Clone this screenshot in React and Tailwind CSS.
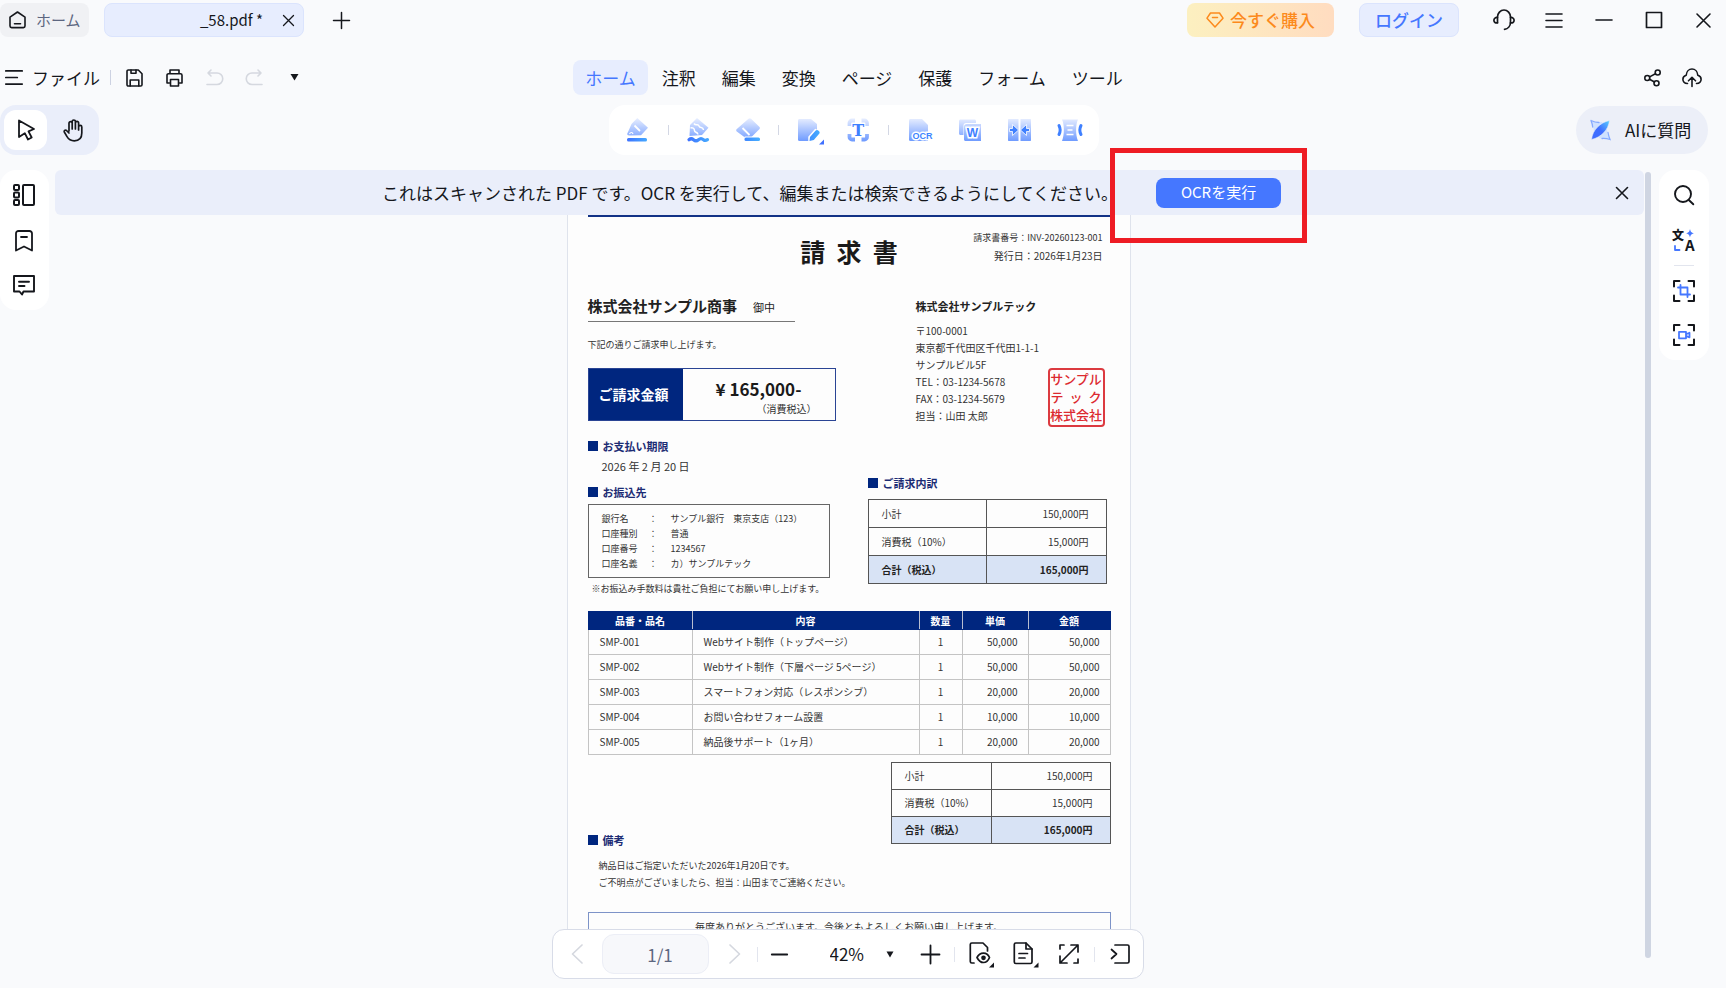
import React, { useState } from 'react';

const MENU_TABS = ['ホーム', '注釈', '編集', '変換', 'ページ', '保護', 'フォーム', 'ツール'];

const ITEMS = [
  { code: 'SMP-001', name: 'Webサイト制作（トップページ）', qty: '1', price: '50,000', amount: '50,000' },
  { code: 'SMP-002', name: 'Webサイト制作（下層ページ 5ページ）', qty: '1', price: '50,000', amount: '50,000' },
  { code: 'SMP-003', name: 'スマートフォン対応（レスポンシブ）', qty: '1', price: '20,000', amount: '20,000' },
  { code: 'SMP-004', name: 'お問い合わせフォーム設置', qty: '1', price: '10,000', amount: '10,000' },
  { code: 'SMP-005', name: '納品後サポート（1ヶ月）', qty: '1', price: '20,000', amount: '20,000' },
];

const BANK = [
  ['銀行名', 'サンプル銀行　東京支店（123）'],
  ['口座種別', '普通'],
  ['口座番号', '1234567'],
  ['口座名義', 'カ）サンプルテック'],
];

// Line icon helper, drawn at its natural size
function Icon({ w, h, sw = 1.6, className = '', children }) {
  return (
    <svg
      width={w}
      height={h}
      viewBox={`0 0 ${w} ${h}`}
      fill="none"
      stroke="currentColor"
      strokeWidth={sw}
      strokeLinecap="round"
      strokeLinejoin="round"
      className={`block shrink-0 overflow-visible ${className}`}
      aria-hidden="true"
    >
      {children}
    </svg>
  );
}

// Filled gradient icon for the tool strip
function ToolIcon({ w = 24, children }) {
  return (
    <svg width={w} height={26} viewBox={`0 0 ${w} 26`} fill="url(#soft)" className="block overflow-visible" aria-hidden="true">
      {children}
    </svg>
  );
}

function Gradients() {
  return (
    <svg width="0" height="0" className="absolute" aria-hidden="true">
      <defs>
        <linearGradient id="soft" gradientUnits="userSpaceOnUse" x1="0" y1="1" x2="0" y2="24">
          <stop offset="0" stopColor="#e9efff" />
          <stop offset="1" stopColor="#6f9bff" />
        </linearGradient>
        <linearGradient id="strong" gradientUnits="userSpaceOnUse" x1="0" y1="0" x2="24" y2="0">
          <stop offset="0" stopColor="#3f70ff" />
          <stop offset="1" stopColor="#45b0ff" />
        </linearGradient>
        <linearGradient id="leaf" x1="0" y1="1" x2="1" y2="0">
          <stop offset="0.5" stopColor="#3f6dff" />
          <stop offset="1" stopColor="#57d0ff" />
        </linearGradient>
      </defs>
    </svg>
  );
}

function TitleBar() {
  return (
    <header className="flex items-center justify-between pt-[3px] pr-[15px]">
      <div className="flex items-center">
        <button className="flex h-[34px] w-[89px] items-center gap-[10px] rounded-lg bg-[#f0f1f4] pl-[9px] text-[15px] text-[#5c6680]">
          <Icon w={17} h={18} className="text-[#15171c]">
            <path d="M1 6.2 8.5 1 16 6.2V15a1.6 1.6 0 0 1-1.6 1.6H2.600A1.600 1.600 0 0 1 1 15z" />
            <path d="M5.500 12.700h6" />
          </Icon>
          ホーム
        </button>
        <div className="ml-[15px] flex h-[34px] w-[200px] items-center justify-end gap-5 rounded-lg border border-[#dbe4fd] bg-[#e7edfe] pr-[9px]">
          <span className="text-[15px]">_58.pdf *</span>
          <button aria-label="タブを閉じる">
            <Icon w={11} h={11} sw={1.3}><path d="M.5.5l10 10M10.500.5l-10 10" /></Icon>
          </button>
        </div>
        <button className="ml-[29px]" aria-label="新しいタブ">
          <Icon w={17} h={17} sw={1.5}><path d="M8.500.5v16M.5 8.500h16" /></Icon>
        </button>
      </div>

      <div className="flex items-center">
        <button className="flex h-[34px] w-[147px] items-center justify-center gap-[6px] rounded-lg bg-linear-to-r from-[#fcf0c0] to-[#ffdcc0] text-[17px] font-medium text-[#fc8a1c]">
          <Icon w={18} h={16} sw={1.5}>
            <path d="M4.500 1h9L17 6.200 9 15 1 6.200z" />
            <path d="M6.500 5.500h5" />
          </Icon>
          今すぐ購入
        </button>
        <button className="ml-[25px] h-[34px] w-[100px] rounded-lg border border-[#dbe4fd] bg-[#e7edfe] text-[17px] font-medium text-[#4577ff]">
          ログイン
        </button>
        <button className="ml-[34px]" aria-label="サポート">
          <Icon w={22} h={22} sw={1.7}>
            <path d="M4.500 13.500V8a6.500 7 0 0 1 13 0v5c0 4-2.500 7-6 7.300" />
            <path d="M4.500 8.500C2.500 8.300.9 9.300.9 11.300s1.600 2.800 3.600 2.500M17.500 8.500c2-.2 3.600.8 3.600 2.800s-1.600 2.800-3.600 2.500" />
          </Icon>
        </button>
        <button className="ml-[30px]" aria-label="メニュー">
          <Icon w={18} h={15} sw={1.6}><path d="M1 1h16M1 7.500h16M1 14h16" /></Icon>
        </button>
        <button className="ml-[33px]" aria-label="最小化">
          <Icon w={16} h={16} sw={1.6}><path d="M0 8h16" /></Icon>
        </button>
        <button className="ml-[33px]" aria-label="最大化">
          <Icon w={18} h={18} sw={1.7}><rect x="1.500" y="1.500" width="15" height="15" /></Icon>
        </button>
        <button className="ml-[33px]" aria-label="閉じる">
          <Icon w={15} h={15} sw={1.6}><path d="M1 1l13 13M14 1 1 14" /></Icon>
        </button>
      </div>
    </header>
  );
}

function MenuBar() {
  const [active, setActive] = useState('ホーム');

  return (
    <div className="mt-[23px] grid grid-cols-[1fr_auto_1fr] items-center pr-[18px]">
      <div className="flex items-center pl-[5px]">
        <button className="flex items-center gap-[9px] text-[17px]">
          <Icon w={18} h={15} sw={1.700}><path d="M.8.9h16.400M.8 7.500h11.500M.8 14.100h16.400" /></Icon>
          ファイル
        </button>
        <span className="ml-[10px] h-[15px] w-px bg-[#cdd2e2]" />
        <button className="ml-[15px]" aria-label="保存">
          <Icon w={17} h={18}>
            <path d="M1 2.300A1.300 1.300 0 0 1 2.300 1h10L16 4.700v11a1.300 1.300 0 0 1-1.300 1.300H2.300A1.300 1.300 0 0 1 1 15.700z" />
            <path d="M4.200 17v-6h8.600v6M5 1v3.300h5V1" />
          </Icon>
        </button>
        <button className="ml-[23px]" aria-label="印刷">
          <Icon w={17} h={18}>
            <path d="M4 4.500V1h9v3.500M3.500 14H1V6.200A1.500 1.500 0 0 1 2.500 4.700h12A1.500 1.500 0 0 1 16 6.200V14h-2.500" />
            <rect x="4.500" y="10.500" width="8" height="6.500" />
          </Icon>
        </button>
        <button className="ml-[23px] text-[#d5d8df]" aria-label="元に戻す" disabled>
          <Icon w={17} h={17}>
            <path d="M5 1 2 4l3 3M2 4h9a5.500 5.500 0 0 1 0 11.500H1" />
          </Icon>
        </button>
        <button className="ml-[23px] text-[#d5d8df]" aria-label="やり直し" disabled>
          <Icon w={17} h={17}>
            <path d="M12 1l3 3-3 3M15 4H6a5.500 5.500 0 0 0 0 11.500h10" />
          </Icon>
        </button>
        <button className="ml-[27px]" aria-label="その他">
          <Icon w={9} h={7} sw={0}><path d="M.5 0h8l-4 6.500z" fill="currentColor" /></Icon>
        </button>
      </div>

      <nav className="flex items-center gap-[2px]">
        {MENU_TABS.map((tab) => (
          <button
            key={tab}
            onClick={() => setActive(tab)}
            className={`h-[35px] rounded-lg px-3 text-[17px] ${active === tab ? 'bg-[#e7edfe] text-[#4577ff]' : ''}`}
          >
            {tab}
          </button>
        ))}
      </nav>

      <div className="flex items-center justify-end gap-[21px] pr-[6px]">
        <button aria-label="共有">
          <Icon w={17} h={18}>
            <circle cx="3.300" cy="9" r="2.500" />
            <circle cx="13.700" cy="3.500" r="2.500" />
            <circle cx="12.500" cy="14.200" r="2.500" />
            <path d="M5.600 7.900l5.800-3.100M5.500 10.200l5 2.800" />
          </Icon>
        </button>
        <button aria-label="アップロード">
          <Icon w={20} h={19}>
            <path d="M5.500 15.500C2.800 15.300.9 13.600.9 11.200c0-2 1.300-3.500 3.300-4C4.500 3.600 6.900 1 10 1s5.500 2.600 5.800 6.200c2 .5 3.300 2 3.300 4 0 2.400-1.900 4.100-4.600 4.300" />
            <path d="M10 18.500V9.500M6.500 12.800 10 9.300l3.500 3.500" />
          </Icon>
        </button>
      </div>
    </div>
  );
}

function ToolSeparator() {
  return <span className="-mx-[7px] h-[10px] w-px bg-[#d3d7e4]" />;
}

function ToolStrip() {
  return (
    <div className="flex h-[50px] items-center gap-[25px] rounded-2xl bg-white px-[17px]">
      <button aria-label="ハイライト">
        <ToolIcon>
          <path d="M11.300 1 22 10.800 15 18.300 3.500 18.500C1 18.500.5 17 2 15L5.500 7z" />
          <path d="M8.500 8.500l5.500 5.500" stroke="#fff" strokeWidth="1.800" />
          <path d="M3.500 17c1-2 3-2 3.500 0" stroke="#fff" strokeWidth="1.200" fill="none" />
          <rect x="1" y="21" width="20" height="3.500" rx="1.500" fill="url(#strong)" />
        </ToolIcon>
      </button>
      <ToolSeparator />
      <button aria-label="波線">
        <ToolIcon>
          <path d="M10 1 21.500 10.800 15 18 2.500 19 3 8z" />
          <path d="M7 6.500c2 3 4-.5 5 2.500s4 0 4.500 4M3.500 11c2-.5 4 0 4 2.500s3 1 3.500 4" stroke="#fff" strokeWidth="1.500" fill="none" />
          <path d="M2 22.700c1.500-1.300 3-1.300 4.500 0s3.500 1.300 5 0 3.500-1.300 5 0 2.500 1 4 0" stroke="url(#strong)" strokeWidth="3.200" fill="none" strokeLinecap="round" />
        </ToolIcon>
      </button>
      <button aria-label="消しゴム">
        <ToolIcon w={24}>
          <path d="M12.500 1.800c.8-.7 1.700-.7 2.500 0l8.300 8c.8.8.8 1.700 0 2.500L15 20.500H9L.8 14.500c-.8-.8-.8-1.700 0-2.500z" />
          <path d="M6.500 11l7 7" stroke="#fff" strokeWidth="1.800" />
          <path d="M8.500 19.500h16v4.500h-14z" fill="#fff" />
          <rect x="8.500" y="20.500" width="15.500" height="3.500" rx="1.500" fill="url(#strong)" />
        </ToolIcon>
      </button>
      <ToolSeparator />
      <button aria-label="編集">
        <ToolIcon>
          <path d="M1 3.500C1 2.600 1.600 2 2.500 2H14l6 5v17H2.500A1.500 1.500 0 0 1 1 22.500z" />
          <path d="M12 24.500v-4.500l6.500-7.500 6 4.500-6 7.500z" fill="#fff" stroke="#fff" strokeWidth="1.500" strokeLinejoin="round" />
          <path d="M12.500 24l.5-4 5.500-6.300c1-1 2-1 3 0 1.300 1 1.500 2 .7 3L16.800 23z" fill="url(#strong)" />
          <path d="M27 22.500v5h-5z" fill="#3f70ff" />
        </ToolIcon>
      </button>
      <button aria-label="テキスト">
        <ToolIcon>
          <path d="M3.500 9V6A2.500 2.500 0 0 1 6 3.500H9M15.500 3.500h3A2.500 2.500 0 0 1 21 6V9M21 17v3a2.500 2.500 0 0 1-2.500 2.500h-3M9 22.500H6A2.500 2.500 0 0 1 3.500 20V17" stroke="url(#soft)" strokeWidth="3.800" fill="none" />
          <text x="12.300" y="19" textAnchor="middle" fontSize="16" fontWeight="700" fontFamily="DejaVu Serif, serif" fill="#3f80ff" stroke="#fff" strokeWidth="2" paintOrder="stroke">T</text>
        </ToolIcon>
      </button>
      <ToolSeparator />
      <button aria-label="OCR">
        <ToolIcon w={25}>
          <path d="M2 3.500C2 2.600 2.600 2 3.500 2H15l6 6v16H3.500A1.500 1.500 0 0 1 2 22.500z" />
          <text x="15.500" y="21.500" textAnchor="middle" fontSize="9" fontWeight="700" fontFamily="Liberation Sans, sans-serif" fill="#3d85ff" stroke="#fff" strokeWidth="3" paintOrder="stroke">OCR</text>
        </ToolIcon>
      </button>
      <button aria-label="Wordに変換">
        <ToolIcon>
          <path d="M3.500 2.500h14c.8 0 1.500.7 1.500 1.500v2H9C7.500 6 6.500 7 6.500 8.500V18h-3C2.700 18 2 17.300 2 16.500V4c0-.8.700-1.500 1.500-1.500z" />
          <path d="M10 7h14v17H8.500c-.8 0-1.500-.7-1.500-1.500V10c0-2 1-3 3-3z" />
          <text x="15.500" y="20" textAnchor="middle" fontSize="12" fontWeight="700" fontFamily="Liberation Sans, sans-serif" fill="#3f80ff" stroke="#fff" strokeWidth="3" paintOrder="stroke">W</text>
        </ToolIcon>
      </button>
      <button aria-label="比較">
        <ToolIcon w={25}>
          <path d="M3 2h9.500v22H3c-.8 0-1-.5-1-1.300V3.300C2 2.500 2.200 2 3 2zM14.500 2H24c.8 0 1 .5 1 1.300v19.400c0 .8-.2 1.300-1 1.300h-9.500z" />
          <path d="M3.500 11.500h3v-4l6 5.500-6 5.500v-4h-3zM23.500 11.500h-3v-4l-6 5.500 6 5.500v-4h3z" fill="#3f80ff" stroke="#fff" strokeWidth=".8" />
        </ToolIcon>
      </button>
      <button aria-label="圧縮">
        <ToolIcon w={26}>
          <path d="M6 2.500h16c-2.500 5-2.500 15.500 0 21.500H6c2.500-6 2.500-16.500 0-21.500z" />
          <path d="M10.500 8.500h7M11.500 13h5M10.500 17.500h7" stroke="#fff" strokeWidth="1.600" />
          <path d="M3 8.500c1.300 2.500 1.300 6.500 0 9M25 8.500c-1.300 2.500-1.300 6.500 0 9" stroke="#3f80ff" strokeWidth="3" fill="none" strokeLinecap="round" />
        </ToolIcon>
      </button>
    </div>
  );
}

function ToolRow() {
  return (
    <div className="mt-[10px] grid grid-cols-[1fr_auto_1fr] items-center pr-[18px]">
      <div className="flex h-[50px] w-[99px] items-center rounded-2xl bg-[#eaeefa] pl-1">
        <button className="flex h-10 w-[43px] items-center justify-center rounded-xl bg-white" aria-label="選択">
          <Icon w={18} h={22} sw={1.8}>
            <path d="M2 1.500 17 10l-5.500 2.300 3.200 6.200-3.700 2-3.200-6.300L2 18z" />
          </Icon>
        </button>
        <button className="ml-4" aria-label="手のひら">
          <Icon w={20} h={23} sw={1.700}>
            <path d="M6 12V4.200a1.600 1.600 0 0 1 3.200 0V10M9.200 9.500V2.600a1.600 1.600 0 0 1 3.200 0V10M12.400 9.500V4a1.600 1.600 0 0 1 3.200 0v7M15.600 8a1.600 1.600 0 0 1 3.200 0v6c0 5-3 7.800-7.500 7.800-3.300 0-5.600-1.300-7.300-4.200L1.300 13c-.7-1.300.9-2.600 2.200-1.500L6 14" />
          </Icon>
        </button>
      </div>
      <ToolStrip />
      <button className="flex h-12 w-[132px] items-center justify-self-end rounded-full bg-[#eceff8] pl-[14px] text-[17px]">
        <svg width="21" height="22" viewBox="0 0 21 22" className="mr-[14px]" aria-hidden="true">
          <path d="M1 1.500C5 4 8 3.500 12 3l5 8c.5 4 1 6 3 9.500-4-1.500-7-1.500-10-1l-6-7c-.5-4-1-7-3-11z" fill="#cfe1ff" />
          <path d="M1 1.500c3 1.500 5 2 8 2M1 1.500c1 2.500 1.500 4 1.700 6.500M12 19.500c3-.2 5 0 8 1-1-2.500-1.500-4-2-7" stroke="#86aaff" strokeWidth="1.300" fill="none" strokeLinecap="round" />
          <path d="M19.500 1.500C18.500 11 11 18.500 1.500 20.500 2.500 11 10 3.500 19.500 1.500z" fill="url(#leaf)" stroke="#eceff8" strokeWidth=".6" />
        </svg>
        AIに質問
      </button>
    </div>
  );
}

function SectionTitle({ children, className = '' }) {
  return (
    <h3 className={`flex items-center gap-[5px] text-[11px] leading-4 font-bold text-[#1c2c74] ${className}`}>
      <span className="size-[10px] bg-[#00267f]" />
      {children}
    </h3>
  );
}

function TotalsTable({ className, labelWidth, rowHeight = 'h-[27px]' }) {
  return (
    <table className={`table-fixed border-collapse text-[10px] leading-4 text-[#333] ${className}`}>
      <tbody>
        {[['小計', '150,000円'], ['消費税（10%）', '15,000円'], ['合計（税込）', '165,000円']].map(([label, value], i) => (
          <tr key={label} className={i === 2 ? 'bg-[#d8e3f5] font-bold text-[#222]' : ''}>
            <th scope="row" className={`border border-[#555] pl-[13px] text-left ${rowHeight} ${labelWidth} ${i === 2 ? 'font-bold' : 'font-normal'}`}>{label}</th>
            <td className="border border-[#555] pr-[17px] text-right">{value}</td>
          </tr>
        ))}
      </tbody>
    </table>
  );
}

function Invoice() {
  return (
    <article className="w-[564px] shrink-0 border-x border-[#dfe3ec] bg-[#fdfdfd] pr-[19px] pl-5 text-[#333]">
      <div className="h-[2px] bg-[#123286]" />

      <div className="grid grid-cols-[1fr_auto_1fr]">
        <h1 className="col-start-2 mt-4 text-[25px] leading-9 font-bold whitespace-pre text-[#1a1a1a]">請  求  書</h1>
        <div className="mt-3 pr-2 text-right leading-[18px]">
          <p className="text-[9px] leading-[18px]">請求書番号：INV-20260123-001</p>
          <p className="text-[10px] leading-[18px]">発行日：2026年1月23日</p>
        </div>
      </div>

      <div className="mt-[25px] flex justify-between">
        <div>
          <h2 className="w-[207px] border-b border-[#777] pb-[2px] text-[15px] leading-6 font-bold text-[#222]">
            株式会社サンプル商事
            <span className="ml-4 text-[11px] font-normal">御中</span>
          </h2>
          <p className="mt-4 text-[9px] leading-[14px]">下記の通りご請求申し上げます。</p>

          <div className="mt-4 flex h-[53px] w-[248px] border border-[#2a4494]">
            <div className="flex w-[94px] items-center justify-center bg-[#00267f] pr-1 text-[14px] font-bold text-white">ご請求金額</div>
            <div className="flex-1 pt-2 text-center">
              <p className="text-[17px] leading-6 font-bold text-[#1a1a1a]">¥ 165,000-</p>
              <p className="pr-[18px] text-right text-[10px] leading-[16px]">（消費税込）</p>
            </div>
          </div>

          <SectionTitle className="mt-[17px]">お支払い期限</SectionTitle>
          <p className="mt-1 pl-[14px] text-[11px] leading-4">2026 年 2 月 20 日</p>
          <SectionTitle className="mt-[10px]">お振込先</SectionTitle>
          <dl className="mt-1 flex h-[74px] w-[242px] flex-col justify-center border border-[#666] pb-px pl-[13px] text-[9px] leading-[15px]">
            {BANK.map(([label, value]) => (
              <div key={label} className="flex">
                <dt className="flex w-[69px]">
                  <span className="w-[47px]">{label}</span>：
                </dt>
                <dd>{value}</dd>
              </div>
            ))}
          </dl>
          <p className="mt-1 pl-1 text-[9px] leading-[14px] whitespace-nowrap">※お振込み手数料は貴社ご負担にてお願い申し上げます。</p>
        </div>

        <div className="w-[243px]">
          <div className="pl-12">
            <h2 className="text-[11px] leading-6 font-bold text-[#222]">株式会社サンプルテック</h2>
            <div className="mt-1 flex h-[105px] justify-between pr-[6px]">
              <div className="text-[10px] leading-[17px] whitespace-nowrap">
                <p>〒100-0001</p>
                <p>東京都千代田区千代田1-1-1</p>
                <p>サンプルビル5F</p>
                <p>TEL：03-1234-5678</p>
                <p>FAX：03-1234-5679</p>
                <p>担当：山田 太郎</p>
              </div>
              <div className="flex h-[59px] w-[57px] flex-col justify-center self-end rounded-sm border-2 border-[#dc3a40] pb-px text-[13px] leading-[18px] font-medium text-[#dc2a30]">
                <span className="text-center">サンプル</span>
                <span className="flex justify-between px-px"><i className="not-italic">テ</i><i className="not-italic">ッ</i><i className="not-italic">ク</i></span>
                <span className="text-center">株式会社</span>
              </div>
            </div>
          </div>
          <SectionTitle className="mt-12">ご請求内訳</SectionTitle>
          <TotalsTable className="mt-2 w-[239px]" labelWidth="w-[118px]" rowHeight="h-7" />
        </div>
      </div>

      <table className="mt-[15px] w-full table-fixed border-collapse text-[10px] leading-4">
        <thead>
          <tr className="bg-[#00267f] text-white">
            <th className="h-[18px] w-[104px] border border-[#00267f] border-r-[#b8bed0]">品番・品名</th>
            <th className="border border-[#00267f] border-r-[#b8bed0]">内容</th>
            <th className="w-[43px] border border-[#00267f] border-r-[#b8bed0]">数量</th>
            <th className="w-[66px] border border-[#00267f] border-r-[#b8bed0]">単価</th>
            <th className="w-[82px] border border-[#00267f]">金額</th>
          </tr>
        </thead>
        <tbody>
          {ITEMS.map((item) => (
            <tr key={item.code}>
              <td className="h-[25px] border border-[#c4c4c4] pl-[11px]">{item.code}</td>
              <td className="border border-[#c4c4c4] pl-[11px]">{item.name}</td>
              <td className="border border-[#c4c4c4] text-center">{item.qty}</td>
              <td className="border border-[#c4c4c4] pr-[10px] text-right">{item.price}</td>
              <td className="border border-[#c4c4c4] pr-[10px] text-right">{item.amount}</td>
            </tr>
          ))}
        </tbody>
      </table>

      <div className="mt-[7px] flex justify-between">
        <div className="pt-[70px]">
          <SectionTitle>備考</SectionTitle>
          <p className="mt-[9px] pl-[11px] text-[9px] leading-[17px] whitespace-nowrap">
            納品日はご指定いただいた2026年1月20日です。<br />
            ご不明点がございましたら、担当：山田までご連絡ください。
          </p>
        </div>
        <TotalsTable className="h-fit w-[220px]" labelWidth="w-[100px]" />
      </div>

      <p className="mt-[21px] h-10 border border-[#7d93c8] pt-[6px] text-center text-[10px] leading-4">
        毎度ありがとうございます。今後ともよろしくお願い申し上げます。
      </p>
    </article>
  );
}

function OcrBanner({ onClose }) {
  return (
    <div className="flex h-[45px] shrink-0 items-center rounded-md bg-[#eaeefa]">
      <div className="flex flex-1 items-center justify-center gap-[38px] pl-2">
        <p className="text-[17px] whitespace-nowrap">
          これはスキャンされた PDF です。OCR を実行して、編集または検索できるようにしてください。
        </p>
        <div className="relative">
          <button className="block h-[30px] w-[125px] rounded-lg bg-[#4577ff] text-[15px] text-white">OCRを実行</button>
          {/* highlight frame around the button */}
          <span className="pointer-events-none absolute -top-[30px] -right-[26px] -bottom-[35px] -left-[46px] z-20 border-[5px] border-[#ee1c24]" />
        </div>
      </div>
      <button className="mr-4 ml-4" aria-label="閉じる" onClick={onClose}>
        <Icon w={12} h={12} sw={1.600}><path d="M.5.5l11 11M11.500.5l-11 11" /></Icon>
      </button>
    </div>
  );
}

function PageBar() {
  const [page, setPage] = useState('1/1');
  const [zoom, setZoom] = useState('42%');

  return (
    <div className="flex h-[50px] items-center rounded-xl border border-[#d8dce8] bg-white pr-[13px] pl-[18px]">
      <button className="text-[#d5d8df]" aria-label="前のページ">
        <Icon w={12} h={20} sw={1.700}><path d="M11 1 1.500 10l9.500 9" /></Icon>
      </button>
      <input
        aria-label="ページ番号"
        value={page}
        onChange={(e) => setPage(e.target.value)}
        className="ml-[19px] h-10 w-[107px] rounded-xl border border-[#eceef6] bg-[#f7f8fb] pl-[10px] text-center text-[17px] text-[#5c6680]"
      />
      <button className="ml-5 text-[#d5d8df]" aria-label="次のページ">
        <Icon w={12} h={20} sw={1.700}><path d="M1 1l9.500 9L1 19" /></Icon>
      </button>
      <span className="ml-4 h-[15px] w-px bg-[#e2e5ee]" />
      <button className="ml-[13px]" aria-label="縮小">
        <Icon w={17} h={17} sw={1.800}><path d="M.8 8.500h15.400" /></Icon>
      </button>
      <select
        aria-label="表示倍率"
        value={zoom}
        onChange={(e) => setZoom(e.target.value)}
        className="ml-[42px] w-[38px] appearance-none bg-transparent text-[17px]"
      >
        <option>42%</option>
      </select>
      <Icon w={8} h={7} sw={0} className="ml-[18px]"><path d="M.5.5h7L4 6.500z" fill="currentColor" /></Icon>
      <button className="ml-[27px]" aria-label="拡大">
        <Icon w={19} h={19} sw={1.800}><path d="M9.500.5v18M.5 9.500h18" /></Icon>
      </button>
      <span className="ml-[14px] h-[15px] w-px bg-[#e2e5ee]" />
      <button className="ml-[14px]" aria-label="表示設定">
        <Icon w={24} h={24} sw={1.700}>
          <path d="M5 21H2.800A1.500 1.500 0 0 1 1.300 19.500V2.500A1.500 1.500 0 0 1 2.800 1H14l4.500 4.500V9" />
          <path d="M8 15.500c1.500-3 4-4.300 6.500-4.300s4.800 1.500 6 4.300c-1.200 3-3.500 5-6 5s-5-2-6.500-5z" />
          <circle cx="14.500" cy="15.800" r="1.500" fill="currentColor" />
          <path d="M25 20.500v5h-5z" fill="currentColor" stroke="none" />
        </Icon>
      </button>
      <button className="ml-[20px]" aria-label="ページ表示">
        <Icon w={24} h={24} sw={1.700}>
          <path d="M2.800 1H13l6 6v13a1.500 1.500 0 0 1-1.500 1.500H2.800A1.500 1.500 0 0 1 1.300 20V2.500A1.500 1.500 0 0 1 2.800 1z" />
          <path d="M13 1v6h6M6 11.500h8.500M6 16h6" />
          <path d="M25.500 20.500v5h-5z" fill="currentColor" stroke="none" />
        </Icon>
      </button>
      <button className="ml-[22px]" aria-label="全画面">
        <Icon w={20} h={20} sw={1.700}>
          <path d="M12 1h7v7M19 1 1 19M8 19H1v-7M1 5V1h4M15 19h4v-4" />
        </Icon>
      </button>
      <span className="ml-[15px] h-[15px] w-px bg-[#e2e5ee]" />
      <button className="ml-[15px]" aria-label="パネルを開く">
        <Icon w={20} h={20} sw={1.700}>
          <path d="M5 1h12.500A1.500 1.500 0 0 1 19 2.500v15a1.500 1.500 0 0 1-1.500 1.500H5M1.500 5.500l5 4.500-5 4.500" />
        </Icon>
      </button>
    </div>
  );
}

function LeftPanel() {
  return (
    <aside className="flex h-[140px] w-[49px] shrink-0 flex-col items-center justify-between rounded-2xl bg-white pt-[14px] pr-[2px] pb-[14px]">
      <button aria-label="サムネイル">
        <Icon w={22} h={22} sw={2}>
          <rect x="1" y="1" width="5" height="5" rx="1" />
          <rect x="1" y="8.500" width="5" height="5" rx="1" />
          <rect x="1" y="16" width="5" height="5" rx="1" />
          <rect x="10" y="1" width="11" height="20" rx="1" />
        </Icon>
      </button>
      <button aria-label="ブックマーク">
        <Icon w={18} h={22} sw={1.800}>
          <path d="M1 20.500V3.500A2.500 2.500 0 0 1 3.500 1h11A2.500 2.500 0 0 1 17 3.500v17L9 16.500z" />
          <path d="M6 7h6" />
        </Icon>
      </button>
      <button aria-label="コメント">
        <Icon w={22} h={21} sw={1.900}>
          <path d="M1 1h20v15.500H10.500L9 19.500l-2.500-3H1z" />
          <path d="M6 6.700h10M6 11h5.500" />
        </Icon>
      </button>
    </aside>
  );
}

function FrameCorners() {
  return <path d="M1 6.500V1h5.500M15.500 1H21v5.500M21 15.500V21h-5.500M6.500 21H1v-5.500" />;
}

function RightPanel() {
  return (
    <aside className="mr-[17px] ml-2 flex h-[190px] w-[50px] shrink-0 flex-col items-center rounded-2xl bg-white pt-[15px]">
      <button aria-label="検索">
        <Icon w={20} h={20} sw={1.900}>
          <circle cx="9" cy="9" r="8" />
          <path d="M14.800 15l4.500 4.300" />
        </Icon>
      </button>
      <button className="mt-6" aria-label="翻訳">
        <Icon w={22} h={22} sw={1.800}>
          <g stroke="none">
            <text x="-1" y="11" fontSize="12" fontWeight="900" fontFamily="Noto Sans CJK JP, sans-serif" fill="currentColor">文</text>
            <text x="12" y="22" fontSize="15" fontWeight="700" fontFamily="Noto Sans CJK JP, sans-serif" fill="currentColor">A</text>
            <path d="M17 0c.7 3 1.200 3.300 4 4.300-2.800 1-3.300 1.400-4 4.200-.7-2.800-1.200-3.200-4-4.200 2.800-1 3.300-1.300 4-4.300z" fill="#4577ff" />
          </g>
          <path d="M2 17v4h4.500" stroke="#4577ff" />
        </Icon>
      </button>
      <span className="mt-[14px] h-px w-5 bg-[#e2e5ee]" />
      <button className="mt-[14px]" aria-label="切り抜き">
        <Icon w={22} h={22} sw={2}>
          <FrameCorners />
          <path d="M7.500 5v9.500h9.500M5 7.500h9.500v9.500" stroke="#4577ff" strokeWidth="1.800" />
        </Icon>
      </button>
      <button className="mt-[22px]" aria-label="画面録画">
        <Icon w={22} h={22} sw={2}>
          <FrameCorners />
          <path d="M6 7.800h7v6.500H6zM13.500 10l3-1.200v4.500l-3-1.200" stroke="#4577ff" strokeWidth="1.800" />
        </Icon>
      </button>
    </aside>
  );
}

function App() {
  const [showBanner, setShowBanner] = useState(true);

  return (
    <div className="flex h-screen flex-col overflow-hidden bg-[#f9fafc] font-['Noto_Sans_CJK_JP','Noto_Sans',sans-serif] text-[#15171c]" lang="ja">
      <Gradients />
      <TitleBar />
      <MenuBar />
      <ToolRow />

      <div className="mt-[15px] flex min-h-0 flex-1">
        <LeftPanel />
        <main className="relative ml-[6px] flex min-w-0 flex-1 flex-col">
          {showBanner && <OcrBanner onClose={() => setShowBanner(false)} />}
          <div className="mb-[30px] flex min-h-0 flex-1 justify-center overflow-hidden pr-[2px]">
            <Invoice />
          </div>
          {/* page controls float over the document */}
          <div className="absolute inset-x-0 bottom-[9px] flex justify-center pr-1">
            <PageBar />
          </div>
        </main>
        <div className="mt-[2px] mb-[30px] ml-px w-[6px] shrink-0 rounded-full bg-[#cfd5e2]" />
        <RightPanel />
      </div>
    </div>
  );
}

export default App;
